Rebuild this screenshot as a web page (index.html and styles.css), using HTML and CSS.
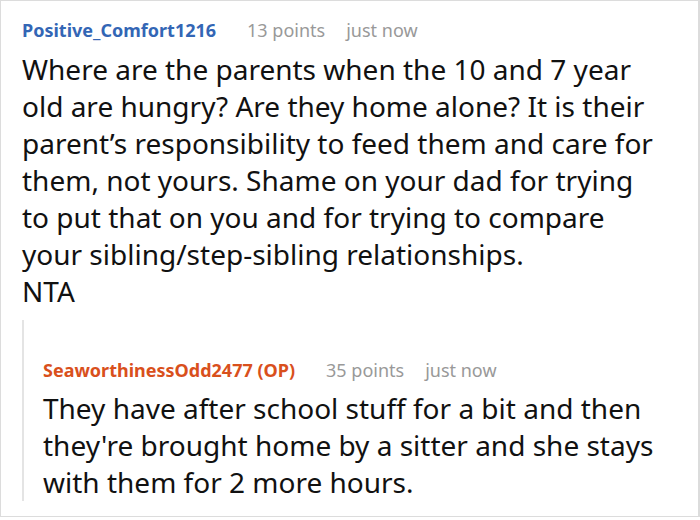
FILE: index.html
```html
<!DOCTYPE html>
<html>
<head>
<meta charset="utf-8">
<link rel="stylesheet" href="styles.css">
</head>
<body>
<div class="frame">
  <div class="comment">
    <div class="meta">
      <span class="author">Positive_Comfort1216</span>
      <span class="info">13 points</span>
      <span class="info">just now</span>
    </div>
    <div class="body">Where are the parents when the 10 and 7 year old are hungry? Are they home alone? It is their parent’s responsibility to feed them and care for them, not yours. Shame on your dad for trying to put that on you and for trying to compare your sibling/step-sibling relationships.<br>NTA</div>
    <div class="reply">
      <div class="meta">
        <span class="author op">SeaworthinessOdd2477 (OP)</span>
        <span class="info">35 points</span>
        <span class="info">just now</span>
      </div>
      <div class="body">They have after school stuff for a bit and then they're brought home by a sitter and she stays with them for 2 more hours.</div>
    </div>
  </div>
</div>
</body>
</html>
```
FILE: styles.css
```css
html, body {
  margin: 0;
  padding: 0;
  background: #fff;
}
.frame {
  box-sizing: border-box;
  width: 700px;
  height: 517px;
  border: 1px solid #dcdcdc;
  border-right-width: 2px;
  overflow: hidden;
  font-family: "Noto Sans", "Open Sans", sans-serif;
  color: #111;
}
.comment {
  padding: 16px 0 0 21px;
}
.meta {
  display: flex;
  gap: 21px;
  font-size: 18px;
  line-height: 26px;
  height: 34px;
}
.author {
  color: #3366b5;
  font-weight: 700;
  margin-right: 10px;
}
.author.op {
  color: #d9501c;
}
.info {
  color: #999;
}
.body {
  font-size: 28px;
  line-height: 37px;
  width: 640px;
}
.reply {
  margin-top: 10px;
  border-left: 2px solid #e4e4e4;
  padding: 37px 0 0 19px;
}
.reply .meta {
  height: 33px;
}
.reply .body {
  width: 620px;
  margin-bottom: -12px;
}
```
